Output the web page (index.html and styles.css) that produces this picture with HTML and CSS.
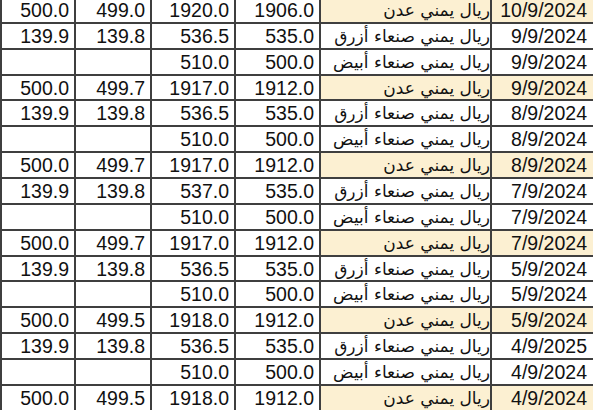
FILE: index.html
```html
<!DOCTYPE html>
<html lang="ar">
<head>
<meta charset="utf-8">
<title>أسعار الصرف</title>
<link rel="stylesheet" href="styles.css">
</head>
<body>
<table class="rates">
  <colgroup>
    <col class="c-n4">
    <col class="c-n3">
    <col class="c-n2">
    <col class="c-n1">
    <col class="c-cur">
    <col class="c-date">
  </colgroup>
  <tbody>
    <tr class="aden"><td>500.0</td><td>499.0</td><td>1920.0</td><td>1906.0</td><td class="cur" dir="rtl">ريال يمني عدن</td><td class="date">10/9/2024</td></tr>
    <tr><td>139.9</td><td>139.8</td><td>536.5</td><td>535.0</td><td class="cur" dir="rtl">ريال يمني صنعاء أزرق</td><td class="date">9/9/2024</td></tr>
    <tr><td></td><td></td><td>510.0</td><td>500.0</td><td class="cur" dir="rtl">ريال يمني صنعاء أبيض</td><td class="date">9/9/2024</td></tr>
    <tr class="aden"><td>500.0</td><td>499.7</td><td>1917.0</td><td>1912.0</td><td class="cur" dir="rtl">ريال يمني عدن</td><td class="date">9/9/2024</td></tr>
    <tr><td>139.9</td><td>139.8</td><td>536.5</td><td>535.0</td><td class="cur" dir="rtl">ريال يمني صنعاء أزرق</td><td class="date">8/9/2024</td></tr>
    <tr><td></td><td></td><td>510.0</td><td>500.0</td><td class="cur" dir="rtl">ريال يمني صنعاء أبيض</td><td class="date">8/9/2024</td></tr>
    <tr class="aden"><td>500.0</td><td>499.7</td><td>1917.0</td><td>1912.0</td><td class="cur" dir="rtl">ريال يمني عدن</td><td class="date">8/9/2024</td></tr>
    <tr><td>139.9</td><td>139.8</td><td>537.0</td><td>535.0</td><td class="cur" dir="rtl">ريال يمني صنعاء أزرق</td><td class="date">7/9/2024</td></tr>
    <tr><td></td><td></td><td>510.0</td><td>500.0</td><td class="cur" dir="rtl">ريال يمني صنعاء أبيض</td><td class="date">7/9/2024</td></tr>
    <tr class="aden"><td>500.0</td><td>499.7</td><td>1917.0</td><td>1912.0</td><td class="cur" dir="rtl">ريال يمني عدن</td><td class="date">7/9/2024</td></tr>
    <tr><td>139.9</td><td>139.8</td><td>536.5</td><td>535.0</td><td class="cur" dir="rtl">ريال يمني صنعاء أزرق</td><td class="date">5/9/2024</td></tr>
    <tr><td></td><td></td><td>510.0</td><td>500.0</td><td class="cur" dir="rtl">ريال يمني صنعاء أبيض</td><td class="date">5/9/2024</td></tr>
    <tr class="aden"><td>500.0</td><td>499.5</td><td>1918.0</td><td>1912.0</td><td class="cur" dir="rtl">ريال يمني عدن</td><td class="date">5/9/2024</td></tr>
    <tr><td>139.9</td><td>139.8</td><td>536.5</td><td>535.0</td><td class="cur" dir="rtl">ريال يمني صنعاء أزرق</td><td class="date">4/9/2025</td></tr>
    <tr><td></td><td></td><td>510.0</td><td>500.0</td><td class="cur" dir="rtl">ريال يمني صنعاء أبيض</td><td class="date">4/9/2024</td></tr>
    <tr class="aden"><td>500.0</td><td>499.5</td><td>1918.0</td><td>1912.0</td><td class="cur" dir="rtl">ريال يمني عدن</td><td class="date">4/9/2024</td></tr>
  </tbody>
</table>
</body>
</html>
```

FILE: styles.css
```css
html, body {
  margin: 0;
  padding: 0;
  background: #ffffff;
  overflow: hidden;
  width: 593px;
  height: 410px;
}

.rates {
  border-collapse: separate;
  border-spacing: 0;
  table-layout: fixed;
  width: 598px;
  margin-top: -2px;
  font-family: "Liberation Sans", Arial, "DejaVu Sans", sans-serif;
  font-size: 19.5px;
  color: #111111;
}

.c-n4 { width: 76px; }
.c-n3 { width: 76px; }
.c-n2 { width: 84px; }
.c-n1 { width: 85px; }
.c-cur { width: 171px; }
.c-date { width: 106px; }

.rates tr {
  height: 25.86px;
}

.rates td {
  box-sizing: border-box;
  padding: 0 5px 0 0;
  border-right: 2px solid #3f3f3f;
  border-bottom: 2px solid #3f3f3f;
  text-align: right;
  line-height: 20px;
  white-space: nowrap;
}

.rates td:first-child {
  border-left: 2px solid #3f3f3f;
}

.rates td.cur {
  padding: 0 2px 0 0;
  font-family: "DejaVu Sans", sans-serif;
  font-size: 17px;
}

.rates td.date {
  padding-right: 9px;
}

.rates tr.aden td.date,
.rates tr.aden td.cur {
  background: #fcf0d2;
}
```
